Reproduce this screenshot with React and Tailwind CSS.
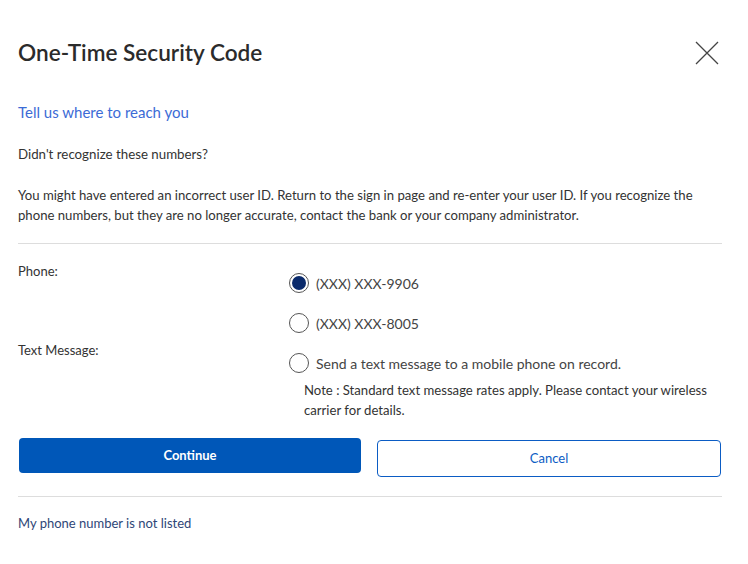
export default function App() {
  const font = { fontFamily: "Lato, 'Liberation Sans', sans-serif" };
  const Radio = ({ checked }) => (
    <span className="flex h-[20px] w-[20px] shrink-0 items-center justify-center rounded-full border border-[#555] bg-white">
      {checked && <span className="h-[14px] w-[14px] rounded-full bg-[#0a2a6b]" />}
    </span>
  );
  return (
    <div className="min-h-[564px] w-[748px] bg-white text-[#333]" style={font}>
      <div className="pl-[18px] pr-[26px]">
        <div className="flex items-center justify-between pt-[37px]">
          <h1 className="text-[22.6px] font-semibold leading-[32px] text-[#2b2b2b]">
            One-Time Security Code
          </h1>
          <svg width="24" height="24" viewBox="0 0 24 24" className="mr-[3px]" fill="none" stroke="#444" strokeWidth="1.3">
            <path d="M1 1 L23 23 M23 1 L1 23" />
          </svg>
        </div>
        <div className="mt-[33px] text-[15px] leading-[20px] text-[#3c6bd6]">Tell us where to reach you</div>
        <div className="mt-[22px] text-[13.3px] leading-[20px]">Didn't recognize these numbers?</div>
        <p className="mt-[21px] text-[13.15px] leading-[20px]">
          You might have entered an incorrect user ID. Return to the sign in page and re-enter your user ID. If you recognize the phone numbers, but they are no longer accurate, contact the bank or your company administrator.
        </p>
        <hr className="mt-[18px] border-t border-[#ddd]" />
        <div className="mt-[17px] flex text-[13px]">
          <div className="w-[271px] leading-[20px]">Phone:</div>
          <div className="flex flex-col pt-[2px]">
            <label className="flex h-[40px] items-center gap-[7px] text-[14px] text-[#444]">
              <Radio checked />
              (XXX) XXX-9906
            </label>
            <label className="flex h-[40px] items-center gap-[7px] text-[14px] text-[#444]">
              <Radio />
              (XXX) XXX-8005
            </label>
          </div>
        </div>
        <div className="flex text-[13px]">
          <div className="-mt-[3px] w-[271px] leading-[20px]">Text Message:</div>
          <div className="flex flex-col">
            <label className="flex h-[40px] items-center gap-[7px] text-[14px] text-[#444]">
              <Radio />
              Send a text message to a mobile phone on record.
            </label>
            <div className="-mt-[3px] w-[420px] pl-[15px] text-[13.15px] leading-[20px] text-[#333]">
              Note : Standard text message rates apply. Please contact your wireless carrier for details.
            </div>
          </div>
        </div>
        <div className="mt-[18px] flex items-start gap-[16px] pl-[1px] pr-[1px]">
          <button className="h-[35px] flex-1 rounded-[4px] bg-[#0057b8] pt-[1px] text-[13px] font-bold text-white">Continue</button>
          <button className="mt-[2px] h-[37px] flex-1 rounded-[4px] border border-[#0b5cc4] bg-white text-[13px] text-[#0b5cc4]">Cancel</button>
        </div>
        <hr className="mt-[19px] border-t border-[#ddd]" />
        <div className="mt-[16px] text-[13px] leading-[20px] text-[#2e4677]">My phone number is not listed</div>
      </div>
    </div>
  );
}
